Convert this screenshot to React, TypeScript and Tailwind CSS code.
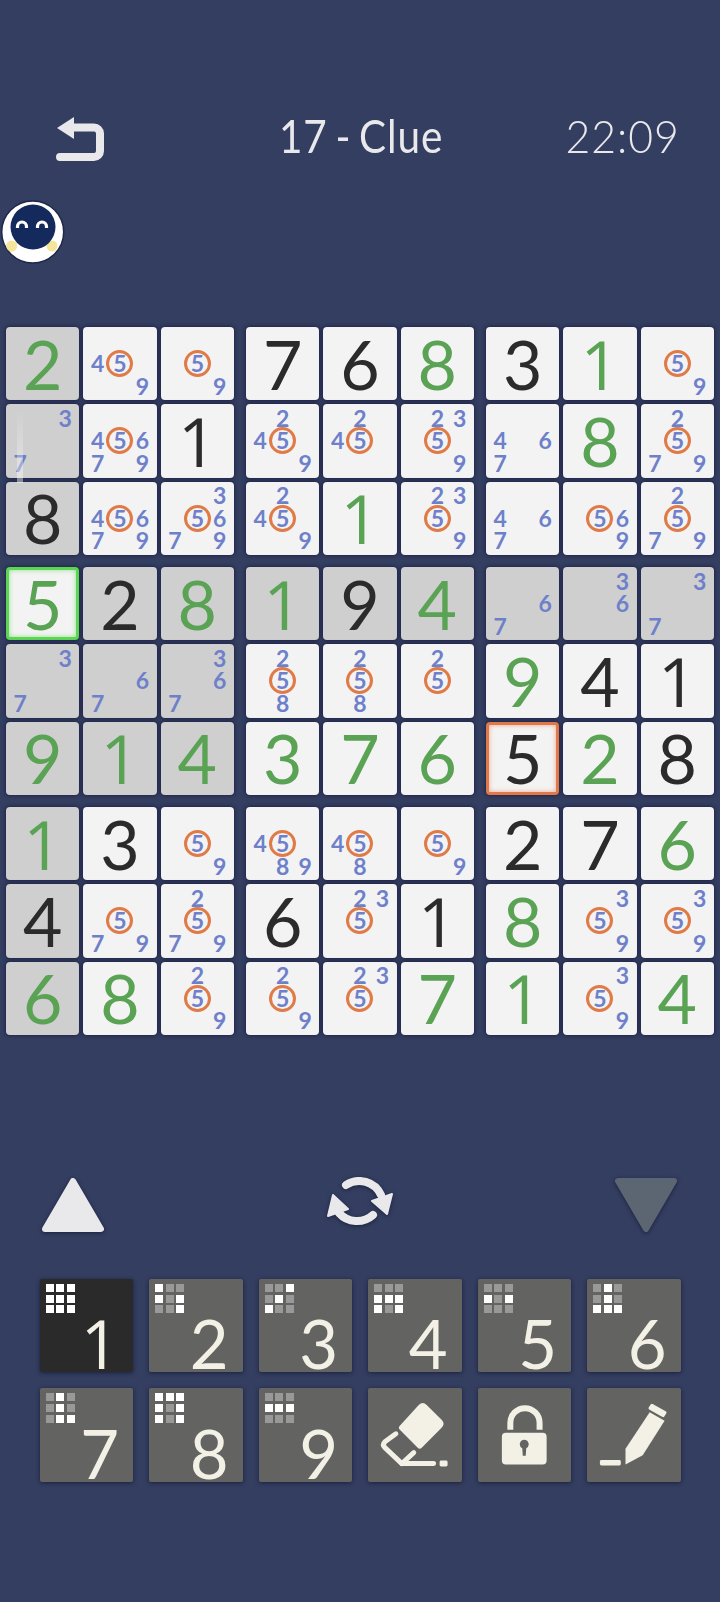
const font = "font-['Lato','Liberation_Sans',sans-serif]";

// g = green digit, k = black digit, n = pencil marks
const board = [
  ["2g", "n459", "n59", "7k", "6k", "8g", "3k", "1g", "n59"],
  ["n37", "n45679", "1k", "n2459", "n245", "n2359", "n467", "8g", "n2579"],
  ["8k", "n45679", "n35679", "n2459", "1g", "n2359", "n467", "n569", "n2579"],
  ["5g", "2k", "8g", "1g", "9k", "4g", "n67", "n36", "n37"],
  ["n37", "n67", "n367", "n258", "n258", "n25", "9g", "4k", "1k"],
  ["9g", "1g", "4g", "3g", "7g", "6g", "5k", "2g", "8k"],
  ["1g", "3k", "n59", "n4589", "n458", "n59", "2k", "7k", "6g"],
  ["4k", "n579", "n2579", "6k", "n235", "1k", "8g", "n359", "n359"],
  ["6g", "8g", "n259", "n259", "n235", "7g", "1g", "n359", "4g"],
];

const patterns: Record<number, string> = {
  1: "111111111",
  2: "100101001",
  3: "001010100",
  4: "000111101",
  5: "000101000",
  6: "010010111",
  7: "010010011",
  8: "111101101",
  9: "000111000",
};

function isGray(r: number, c: number) {
  if (r === 3 && c === 0) return false;
  return r === 3 || c === 0 || (r >= 3 && r <= 5 && c < 3);
}

function Notes({ values }: { values: string }) {
  return (
    <div className="grid h-full w-full grid-cols-3 grid-rows-3 p-[3px]">
      {[1, 2, 3, 4, 5, 6, 7, 8, 9].map((n) => (
        <div key={n} className="flex items-center justify-center text-[23px] leading-none font-bold text-[#6d80c9]">
          {values.includes(String(n)) &&
            (n === 5 ? (
              <span className="-m-[2px] flex h-[27px] w-[27px] shrink-0 items-center justify-center rounded-full border-[3px] border-[#e07b48]">
                5
              </span>
            ) : (
              <span>{n}</span>
            ))}
        </div>
      ))}
    </div>
  );
}

function Cell({ r, c }: { r: number; c: number }) {
  const v = board[r][c];
  const selected = r === 3 && c === 0;
  const conflict = r === 5 && c === 6;
  let frame = "shadow-[0_0_4px_rgba(18,22,58,0.9)]";
  if (selected) frame = "border-[3px] border-[#5cd652] shadow-[inset_0_0_5px_#8fe08a,0_0_4px_rgba(18,22,58,0.9)]";
  if (conflict) frame = "border-[3px] border-[#e0784a] shadow-[inset_0_0_5px_#eda98a,0_0_4px_rgba(18,22,58,0.9)]";
  return (
    <div
      className={`flex items-center justify-center rounded-[4px] ${isGray(r, c) ? "bg-[#cfcfcf]" : "bg-[#f3f3f4]"} ${frame}`}
    >
      {v[0] === "n" ? (
        <Notes values={v.slice(1)} />
      ) : (
        <span
          className={`text-[68px] leading-none ${v[0] === "1" ? "font-['Open_Sans'] text-[67px] font-medium" : ""} ${
            v[1] === "g" ? "text-[#5aa354]" : "text-[#2b2b2b]"
          }`}
        >
          {v[0]}
        </span>
      )}
    </div>
  );
}

function Block({ br, bc }: { br: number; bc: number }) {
  const cells = [];
  for (let r = br * 3; r < br * 3 + 3; r++) {
    for (let c = bc * 3; c < bc * 3 + 3; c++) {
      cells.push(<Cell key={`${r}-${c}`} r={r} c={c} />);
    }
  }
  return <div className="grid auto-rows-[73.33px] grid-cols-[repeat(3,73.33px)] gap-[4px]">{cells}</div>;
}

function MiniGrid({ n }: { n: number }) {
  return (
    <div className="grid grid-cols-[repeat(3,8px)] auto-rows-[8px] gap-[2.7px]">
      {patterns[n].split("").map((p, i) => (
        <div key={i} className={p === "1" ? "bg-white" : "bg-[#999999]"} />
      ))}
    </div>
  );
}

function PadButton({ children, dark }: { children: React.ReactNode; dark?: boolean }) {
  return (
    <div
      className={`h-[93.5px] rounded-[2px] shadow-[0_1px_4px_rgba(15,20,45,0.7)] ${dark ? "bg-[#2a2a2a]" : "bg-[#636461]"}`}
    >
      {children}
    </div>
  );
}

function NumberButton({ n }: { n: number }) {
  return (
    <PadButton dark={n === 1}>
      <div className="flex h-full flex-col justify-between pt-[5px] pr-[14px] pb-[1px] pl-[6px]">
        <MiniGrid n={n} />
        <span className={`self-end text-[67px] leading-[60px] text-[#f3f0e6] ${n === 1 ? "font-['Open_Sans']" : ""}`}>
          {n}
        </span>
      </div>
    </PadButton>
  );
}

function Eraser() {
  return (
    <svg viewBox="0 0 94 94" className="h-full w-full" fill="#f3f0e6">
      <path d="M51 17 Q55 13 59 17 L74 32 Q78 36 74 40 L54 60 Q52 62 50 60 L32 42 Q30 40 32 38 Z" />
      <path
        d="M28 46 L17 54 Q14 57 17 60 L34 76 H66"
        fill="none"
        stroke="#f3f0e6"
        strokeWidth="5"
        strokeLinecap="round"
        strokeLinejoin="round"
      />
      <path d="M34 76 L46 65" fill="none" stroke="#f3f0e6" strokeWidth="5" strokeLinecap="round" />
      <rect x="72" y="73" width="8" height="6" rx="1.5" />
    </svg>
  );
}

function Lock() {
  return (
    <svg viewBox="0 0 94 94" className="h-full w-full" fill="#f3f0e6">
      <path d="M32.5 42 V35 a14.7 14.7 0 0 1 29.4 0 V42" fill="none" stroke="#f3f0e6" strokeWidth="6" />
      <path
        fillRule="evenodd"
        d="M28 45 H65 Q69 45 69 49 V73 Q69 77 65 77 H28 Q24 77 24 73 V49 Q24 45 28 45 Z M46.5 52 a4.5 4.5 0 0 0 -2 8.5 L45 68 H48 L48.5 60.5 a4.5 4.5 0 0 0 -2 -8.5 Z"
      />
    </svg>
  );
}

function Pencil() {
  return (
    <svg viewBox="0 0 94 94" className="h-full w-full" fill="#f3f0e6">
      <rect x="13" y="72.5" width="21" height="5.5" rx="1.5" />
      <path d="M38.7 77 V61 L63 24.5 L78 33 L56 67.5 Z" />
      <path d="M66 16 L79.5 23.5 Q80.5 24.5 79.5 26 L77.5 29 Q77 30 75.5 29 L62.5 21.5 Q61.5 21 62 19.5 L64 16.5 Q64.8 15.5 66 16 Z" />
    </svg>
  );
}

export default function App() {
  return (
    <div className={`relative h-[1602px] w-[720px] overflow-hidden bg-[#343e60] pt-[117px] ${font}`}>
      {/* Header */}
      <div className="flex h-[44px] items-center pr-[40px] pl-[56px] text-[#e9e9ec]">
        <svg viewBox="0 0 48 44" className="h-[44px] w-[48px] shrink-0" fill="#e9e9ec">
          <path d="M18 0 V22 L1 11 Z" />
          <path
            d="M17 10.5 H38 a6 6 0 0 1 6 6 V34 a6 6 0 0 1 -6 6 H4"
            fill="none"
            stroke="#e9e9ec"
            strokeWidth="8"
            strokeLinecap="round"
          />
        </svg>
        <span className="mb-[6px] ml-[175px] origin-left scale-x-[0.88] text-[46px] leading-none tracking-[1px] [word-spacing:-4px]">
          17 - Clue
        </span>
        <span className="mb-[6px] ml-auto origin-right scale-x-[0.93] text-[46px] leading-none font-light tracking-[1px]">
          22:09
        </span>
      </div>

      {/* Mascot */}
      <svg viewBox="0 0 68 66" className="mt-[38px] -ml-[1px] h-[66px] w-[68px]">
        <circle cx="33.7" cy="33" r="31" fill="#ffffff" stroke="#20284a" strokeWidth="1.5" />
        <circle cx="12.7" cy="47" r="5.5" fill="#f5e59a" />
        <circle cx="53" cy="47" r="5.5" fill="#f5e59a" />
        <circle cx="34" cy="28" r="22.5" fill="#152a5c" />
        <path d="M18.5 29 V27.5 a4.5 4.5 0 0 1 9 0 V29" fill="none" stroke="#ffffff" strokeWidth="3.2" />
        <path d="M38.5 29 V27.5 a4.5 4.5 0 0 1 9 0 V29" fill="none" stroke="#ffffff" strokeWidth="3.2" />
      </svg>

      {/* Board */}
      <div className="mt-[62px] ml-[6px] grid w-[708px] grid-cols-3 gap-[12px]">
        {[0, 1, 2].map((br) => [0, 1, 2].map((bc) => <Block key={`${br}-${bc}`} br={br} bc={bc} />))}
      </div>

      <div className="absolute top-[410px] left-[17px] h-[73px] w-[6px] bg-gradient-to-b from-white/0 to-white/45" />

      {/* Controls */}
      <div className="mt-[142px] flex h-[57px] items-center justify-between pr-[42px] pl-[41px]">
        <svg viewBox="0 0 64 56" className="h-[56px] w-[64px] drop-shadow-[0_1px_2px_rgba(15,20,45,0.7)]">
          <path d="M32 4 L60 52 H4 Z" fill="#e9e9ec" stroke="#e9e9ec" strokeWidth="6" strokeLinejoin="round" />
        </svg>
        <svg viewBox="0 0 68 58" className="h-[58px] w-[68px] drop-shadow-[0_1px_2px_rgba(15,20,45,0.7)]">
          <g fill="#e9e9ec" stroke="#e9e9ec" strokeLinejoin="round">
            <path d="M20 9 A24 24 0 0 1 55 19" fill="none" strokeWidth="8" strokeLinecap="round" />
            <path d="M47 39 A24 24 0 0 1 13 37" fill="none" strokeWidth="8" strokeLinecap="round" />
            <path d="M66 18 L61 38 L46 25 Z" strokeWidth="2" />
            <path d="M2 40 L7 19 L22 33 Z" strokeWidth="2" />
          </g>
        </svg>
        <svg viewBox="0 0 64 56" className="h-[56px] w-[64px] drop-shadow-[0_1px_2px_rgba(15,20,45,0.7)]">
          <path d="M4 4 H60 L32 52 Z" fill="#5c6673" stroke="#5c6673" strokeWidth="6" strokeLinejoin="round" />
        </svg>
      </div>

      {/* Number pad */}
      <div className="mt-[45px] ml-[39.5px] grid w-[641px] grid-cols-[repeat(6,93.5px)] gap-[16px]">
        {[1, 2, 3, 4, 5, 6, 7, 8, 9].map((n) => (
          <NumberButton key={n} n={n} />
        ))}
        <PadButton>
          <Eraser />
        </PadButton>
        <PadButton>
          <Lock />
        </PadButton>
        <PadButton>
          <Pencil />
        </PadButton>
      </div>
    </div>
  );
}
